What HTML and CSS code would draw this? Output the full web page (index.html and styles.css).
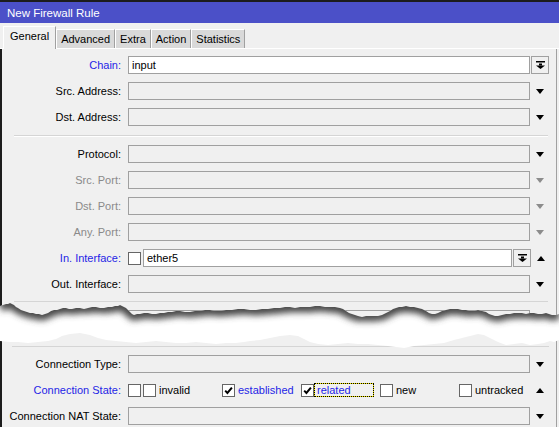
FILE: index.html
```html
<!DOCTYPE html>
<html lang="en">
<head>
    <meta charset="UTF-8">
    <title>New Firewall Rule</title>
    <link rel="stylesheet" href="styles.css">
</head>
<body>
    <div class="window">
        <div class="titlebar">New Firewall Rule</div>

        <div class="tabs">
            <span class="tab active">General</span>
            <span class="tab">Advanced</span>
            <span class="tab">Extra</span>
            <span class="tab">Action</span>
            <span class="tab">Statistics</span>
        </div>

        <div class="panel">
            <div class="row">
                <span class="label blue">Chain:</span>
                <div class="field on">input</div>
                <div class="side"><span class="btn"><svg width="9" height="8" viewBox="0 0 9 8"><rect x="0" y="0" width="9" height="1.5"/><rect x="3" y="2.5" width="3" height="2"/><polygon points="0,4.5 9,4.5 4.5,8"/></svg></span></div>
            </div>
            <div class="row">
                <span class="label">Src. Address:</span>
                <div class="field"></div>
                <div class="side center"><span class="arrow"></span></div>
            </div>
            <div class="row">
                <span class="label">Dst. Address:</span>
                <div class="field"></div>
                <div class="side center"><span class="arrow"></span></div>
            </div>

            <div class="sep"></div>

            <div class="row">
                <span class="label">Protocol:</span>
                <div class="field"></div>
                <div class="side center"><span class="arrow"></span></div>
            </div>
            <div class="row">
                <span class="label grey">Src. Port:</span>
                <div class="field"></div>
                <div class="side center"><span class="arrow off"></span></div>
            </div>
            <div class="row">
                <span class="label grey">Dst. Port:</span>
                <div class="field"></div>
                <div class="side center"><span class="arrow off"></span></div>
            </div>
            <div class="row">
                <span class="label grey">Any. Port:</span>
                <div class="field"></div>
                <div class="side center"><span class="arrow off"></span></div>
            </div>
            <div class="row">
                <span class="label blue">In. Interface:</span>
                <div class="combo">
                    <span class="check"></span>
                    <div class="field on grow">ether5</div>
                    <span class="btn"><svg width="9" height="8" viewBox="0 0 9 8"><rect x="0" y="0" width="9" height="1.5"/><rect x="3" y="2.5" width="3" height="2"/><polygon points="0,4.5 9,4.5 4.5,8"/></svg></span>
                </div>
                <div class="side center"><span class="arrow up"></span></div>
            </div>
            <div class="row">
                <span class="label">Out. Interface:</span>
                <div class="field"></div>
                <div class="side center"><span class="arrow"></span></div>
            </div>

            <div class="sep cut"></div>
        </div>

        <!-- torn paper strip between the two halves of the form -->
        <svg class="tear" width="559" height="49" viewBox="0 0 559 49">
            <defs>
                <clipPath id="paper">
                    <polygon points="0,4 3,3 6,2 8,2 10,1 12,2 14,3 16,5 18,6 21,8 24,9 27,10 30,11 33,11 36,12 39,12 42,13 45,12 48,11 51,9 54,8 57,8 60,7 63,6 66,6 69,7 72,7 76,6 80,6 84,7 88,6 92,5 96,5 100,6 104,6 108,5 112,5 115,4 118,4 120,3 122,4 124,5 126,6 128,8 130,10 132,12 134,13 137,12 140,12 144,11 148,11 152,12 156,12 160,11 164,11 168,10 172,10 176,9 180,9 185,10 190,10 195,9 200,9 205,8 210,8 215,9 220,9 226,8 232,8 238,7 244,7 250,8 256,8 262,7 268,7 274,6 280,6 285,5 290,5 295,6 300,5 305,5 310,5 315,4 320,4 325,5 330,5 335,5 340,6 343,7 346,9 349,11 352,12 355,13 358,14 362,15 366,14 370,14 374,14 378,14 382,13 386,11 390,9 393,7 396,6 399,5 402,5 406,4 410,5 414,5 418,6 422,7 426,9 429,11 432,12 435,12 438,11 442,9 446,8 450,7 454,7 458,7 462,8 466,8 470,9 474,9 478,8 482,9 486,10 489,12 492,13 495,14 498,14 502,13 506,12 510,12 514,11 518,11 522,11 526,12 530,11 534,11 538,12 542,12 546,11 549,12 552,13 556,13 559,12 559,38 554,40 550,39 544,41 538,42 530,43 522,41 514,42 506,43 498,40 490,36 484,33 478,32 470,34 462,36 454,38 444,41 434,42 424,43 414,44 404,46 396,45 388,44 378,43 368,42 358,42 348,41 338,42 328,43 318,42 310,40 304,37 298,34 290,33 280,34 270,36 260,38 250,39 244,40 236,41 226,41 216,42 206,41 196,40 186,41 176,41 166,40 156,39 146,40 136,41 126,40 116,39 106,38 98,36 90,33 80,31 70,32 62,34 56,37 48,39 38,40 28,41 18,40 10,40 0,39"/>
                </clipPath>
                <filter id="soft" filterUnits="userSpaceOnUse" x="-20" y="-20" width="600" height="90">
                    <feGaussianBlur stdDeviation="3.4"/>
                </filter>
            </defs>
            <rect width="559" height="49" fill="#f0f0f0"/>
            <rect x="0" y="0" width="2" height="49" fill="#1c1c1c"/>
            <rect x="556" y="0" width="1" height="49" fill="#a0a0a0"/>
            <rect x="128.5" y="8.5" width="401" height="21" fill="none" stroke="#a0a0a0"/>
            <rect x="12" y="44" width="537" height="1" fill="#d5d5d5"/>
            <g clip-path="url(#paper)">
                <rect width="559" height="49" fill="#fff"/>
                <polyline filter="url(#soft)" transform="translate(0 -1)" fill="none" stroke="#4a4a4a" stroke-width="13" points="0,4 6,2 10,1 14,3 18,6 24,9 30,11 36,12 42,13 48,11 54,8 60,7 66,6 72,7 80,6 88,6 96,5 104,6 112,5 118,4 122,4 126,6 130,10 134,13 140,12 148,11 156,12 164,11 172,10 180,9 190,10 200,9 210,8 220,9 232,8 244,7 256,8 268,7 280,6 290,5 300,5 310,5 320,4 330,5 340,6 346,9 352,12 358,14 366,14 374,14 382,13 390,9 396,6 402,5 410,5 418,6 426,9 432,12 438,11 446,8 454,7 462,8 470,9 478,8 486,10 492,13 498,14 506,12 514,11 522,11 530,11 538,12 546,11 552,13 559,12"/>
            </g>
        </svg>

        <div class="panel lower">
            <div class="row">
                <span class="label">Connection Type:</span>
                <div class="field"></div>
                <div class="side center"><span class="arrow"></span></div>
            </div>
            <div class="row">
                <span class="label blue">Connection State:</span>
                <div class="states">
                    <span class="check"></span>
                    <div class="state-grid">
                        <span class="opt"><span class="check"></span><span class="text">invalid</span></span>
                        <span class="opt"><span class="check on"><svg width="11" height="11" viewBox="0 0 11 11"><path d="M2.2 5.6 L4.4 7.9 L8.9 2.6"/></svg></span><span class="text blue">established</span></span>
                        <span class="opt"><span class="check on"><svg width="11" height="11" viewBox="0 0 11 11"><path d="M2.2 5.6 L4.4 7.9 L8.9 2.6"/></svg></span><span class="text blue focus">related</span></span>
                        <span class="opt"><span class="check"></span><span class="text">new</span></span>
                        <span class="opt"><span class="check"></span><span class="text">untracked</span></span>
                    </div>
                </div>
                <div class="side center"><span class="arrow up"></span></div>
            </div>
            <div class="row">
                <span class="label">Connection NAT State:</span>
                <div class="field"></div>
                <div class="side center"><span class="arrow"></span></div>
            </div>
        </div>
    </div>
</body>
</html>
```

FILE: styles.css
```css
body {
    margin: 0;
    background-color: #f0f0f0;
    font-family: "Liberation Sans", Arial, sans-serif;
    font-size: 11px;
    color: #000;
}

.window {
    width: 559px;
}

/* blue caption bar */
.titlebar {
    height: 21px;
    line-height: 22px;
    border-top: 2px solid #1c1c1c;
    background-color: #4b50c8;
    color: #fff;
    padding-left: 7px;
    font-size: 11.5px;
}

/* tab strip */
.tabs {
    display: flex;
    align-items: flex-end;
    height: 25px;
    padding-left: 3px;
    border-bottom: 1px solid #fff;
}

.tab {
    box-sizing: border-box;
    height: 19px;
    line-height: 18px;
    padding: 0 4px;
    background-color: #d9d9d9;
    border: 1px solid #fff;
    border-right-color: #a0a0a0;
    border-bottom: none;
}

.tab.active {
    height: 23px;
    line-height: 19px;
    margin-bottom: -1px;
    padding: 0 6px;
    background-color: #f0f0f0;
}

/* form body */
.panel {
    margin-right: 2px;
    padding-top: 3px;
    border-left: 2px solid #1c1c1c;
    border-right: 1px solid #a0a0a0;
}

.panel.lower {
    padding-top: 0;
}

.row {
    display: flex;
    align-items: center;
    height: 26px;
}

.label {
    width: 119px;
    margin-right: 7px;
    text-align: right;
    white-space: nowrap;
}

.blue {
    color: #1f1fe6;
}

.grey {
    color: #8a8a8a;
}

.field {
    box-sizing: border-box;
    width: 402px;
    height: 18px;
    line-height: 16px;
    padding-left: 3px;
    border: 1px solid #a0a0a0;
    background-color: #f0f0f0;
}

.field.on {
    background-color: #fff;
}

.field.grow {
    flex: 1;
    width: auto;
}

.combo {
    display: flex;
    align-items: center;
    gap: 2px;
    width: 403px;
}

.combo .btn {
    margin-left: -1px;
}

.side {
    display: flex;
    align-items: center;
    width: 20px;
}

.side.center {
    justify-content: center;
}

.side .btn {
    margin-left: 1px;
}

.btn {
    box-sizing: border-box;
    display: flex;
    align-items: center;
    justify-content: center;
    width: 18px;
    height: 18px;
    border: 1px solid #a0a0a0;
    background-color: #f0f0f0;
}

.btn svg {
    fill: #000;
}

/* little drop-down triangles */
.arrow {
    width: 0;
    height: 0;
    border-left: 4px solid transparent;
    border-right: 4px solid transparent;
    border-top: 5px solid #000;
}

.arrow.off {
    border-top-color: #8c8c8c;
}

.arrow.up {
    border-top: none;
    border-bottom: 5px solid #000;
}

.sep {
    margin: 5px 8px 4px 12px;
    border-top: 1px solid #d5d5d5;
    border-bottom: 1px solid #fff;
}

.sep.cut {
    margin: 4px 8px 0 12px;
    border-bottom: none;
}

.tear {
    display: block;
}

/* check boxes */
.check {
    box-sizing: border-box;
    display: inline-flex;
    align-items: center;
    justify-content: center;
    flex-shrink: 0;
    width: 13px;
    height: 13px;
    border: 1px solid #666;
    background-color: #fff;
}

.check svg path {
    fill: none;
    stroke: #000;
    stroke-width: 2;
}

.states {
    display: flex;
    align-items: center;
    width: 402px;
}

.state-grid {
    display: grid;
    grid-template-columns: repeat(5, 79px);
    margin-left: 2px;
}

.opt {
    display: flex;
    align-items: center;
}

.opt .text {
    box-sizing: border-box;
    height: 14px;
    line-height: 12px;
    padding: 0 2px;
    border: 1px solid transparent;
}

.opt .text.focus {
    width: 60px;
    border-color: #f2e600;
    outline: 1px dotted #000;
    outline-offset: -1px;
}
```
